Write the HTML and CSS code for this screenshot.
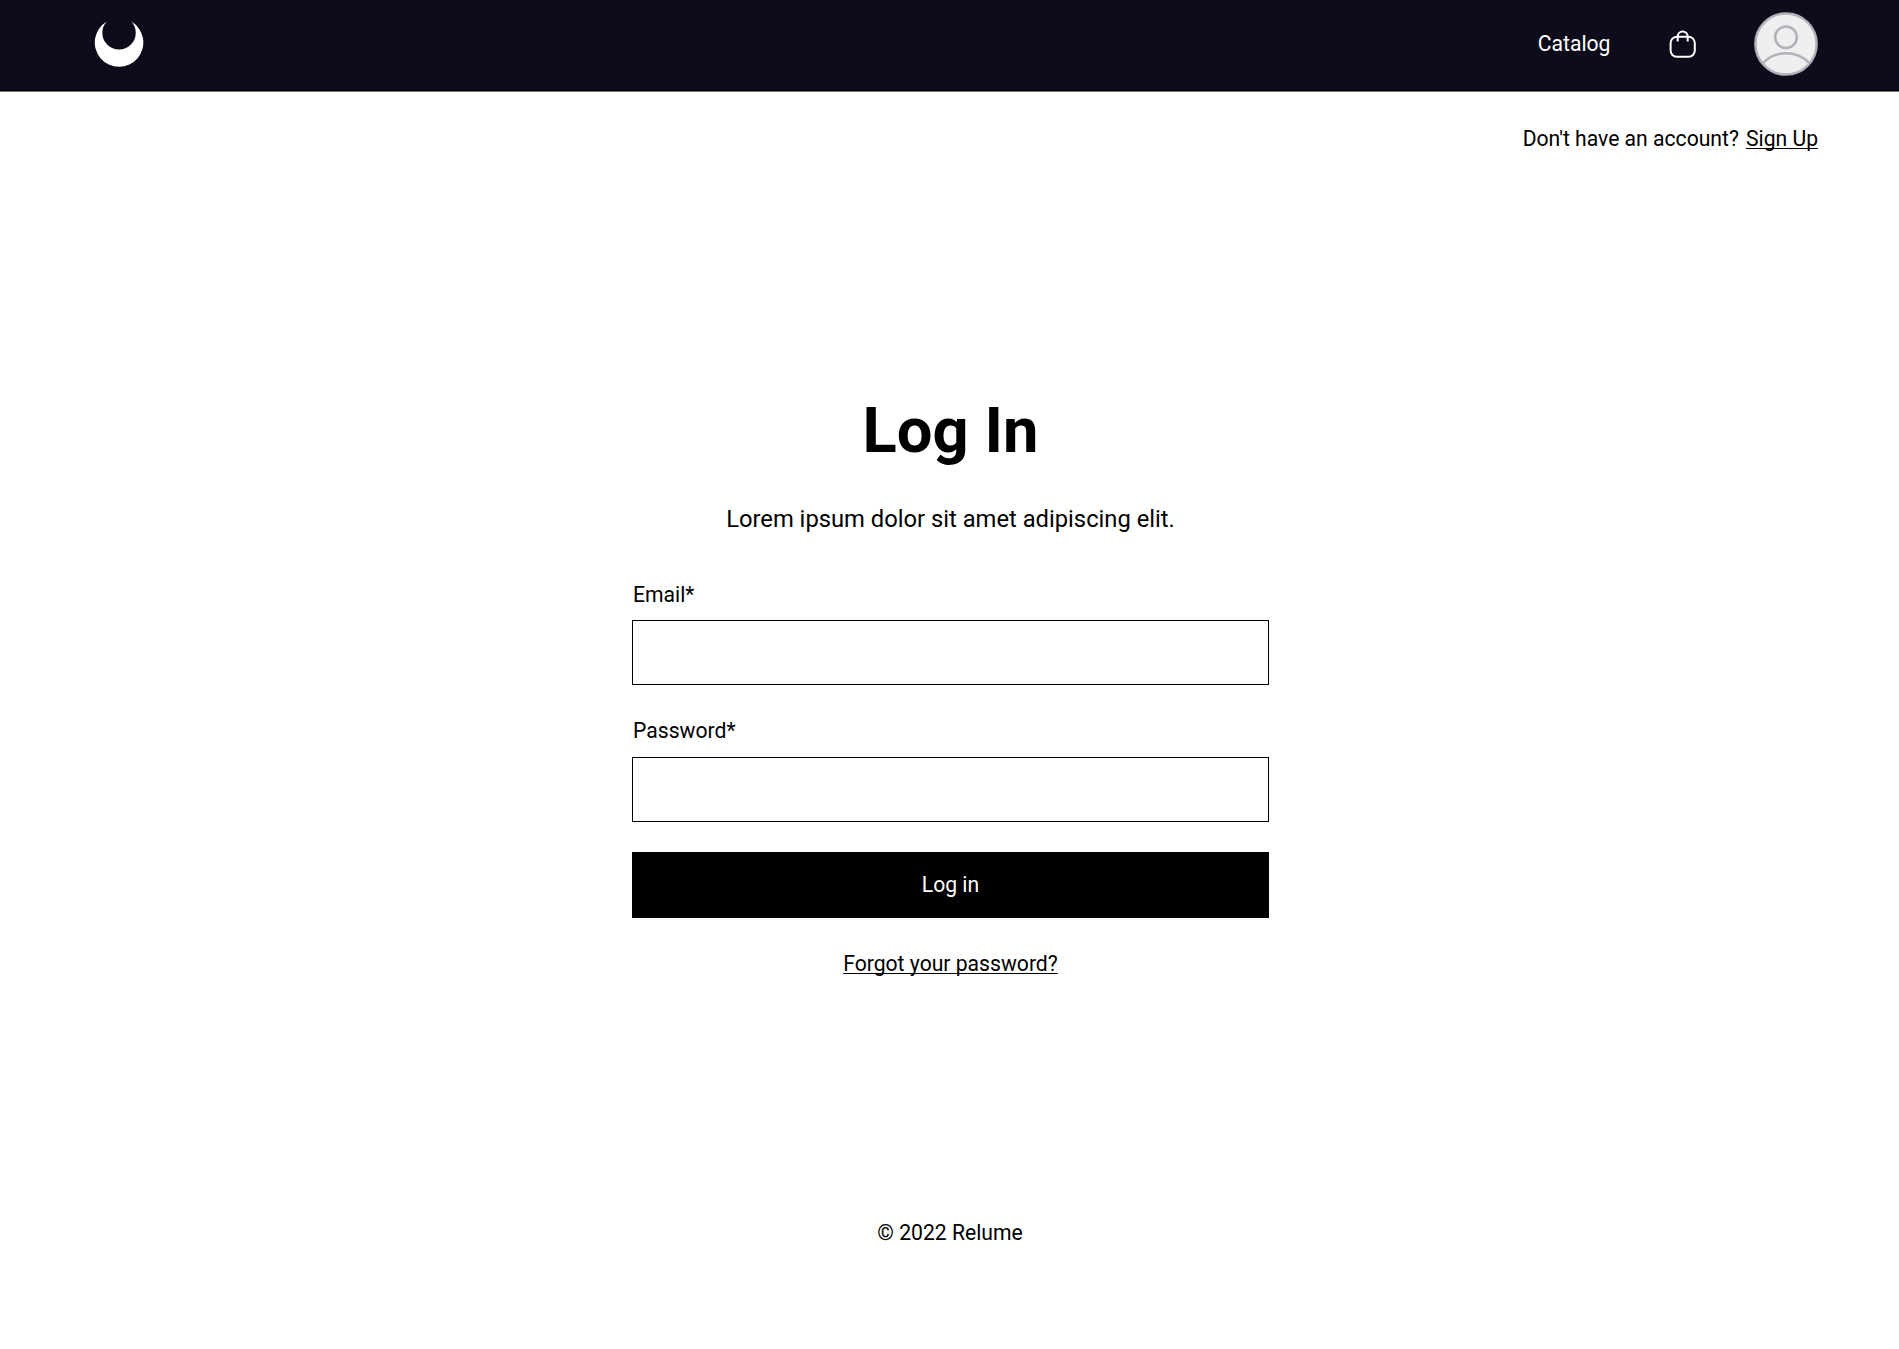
FILE: index.html
```html
<!DOCTYPE html>
<html lang="en">
<head>
<meta charset="utf-8">
<title>Log In</title>
<link rel="stylesheet" href="styles.css">
</head>
<body>
<header class="navbar">
  <a class="logo" href="#" aria-label="Home">
    <svg width="52" height="52" viewBox="93.2 17.9 52 52"><path fill="#fff" d="M107 21.4A24.3 24.3 0 1 0 131.5 21.4A16.7 16.7 0 1 1 107 21.4Z"/></svg>
  </a>
  <nav class="nav-links">
    <a class="nav-link" href="#">Catalog</a>
    <a class="bag" href="#" aria-label="Bag">
      <svg width="28" height="30" viewBox="0 0 28 30" fill="none" stroke="#fff" stroke-width="2"><rect x="1.6" y="7.8" width="24.2" height="20" rx="6.2"/><path d="M8.7 12.6V7.4a5 5 0 0 1 10 0V12.6"/></svg>
    </a>
    <a class="avatar" href="#" aria-label="Account">
      <svg width="64" height="64" viewBox="0 0 64 64" stroke="#b1b2b9" stroke-width="2.5"><circle cx="32" cy="32" r="30.6" fill="#efeff0"/><circle cx="32" cy="25.2" r="10.8" fill="none"/><path fill="none" d="M9 50.8a32.5 32.5 0 0 1 46 0"/></svg>
    </a>
  </nav>
</header>
<div class="signup">
  <span>Don't have an account?</span>
  <a href="#">Sign Up</a>
</div>
<main class="login">
  <h1>Log In</h1>
  <p class="intro">Lorem ipsum dolor sit amet adipiscing elit.</p>
  <form class="form">
    <label class="field"><span>Email*</span><input type="email"></label>
    <label class="field"><span>Password*</span><input type="password"></label>
    <button type="button">Log in</button>
    <a class="forgot" href="#">Forgot your password?</a>
  </form>
</main>
<footer class="footer">© 2022 Relume</footer>
</body>
</html>
```

FILE: styles.css
```css
* {
  box-sizing: border-box;
}

body {
  margin: 0;
  min-height: 1349px;
  display: flex;
  flex-direction: column;
  background: #fff;
  color: #000;
  font-family: Roboto, "Liberation Sans", sans-serif;
  font-size: 21.15px;
  line-height: 32px;
}

a {
  color: inherit;
}

svg {
  display: block;
}

.navbar {
  height: 92px;
  padding: 0 81px 3px 93px;
  display: flex;
  align-items: center;
  justify-content: space-between;
  background: linear-gradient(#0e0b1b 90px, #000 90px);
  border-bottom: 1px solid #73736f;
  color: #fff;
}

.nav-links {
  display: flex;
  align-items: center;
}

.nav-link {
  margin-right: 58.5px;
  text-decoration: none;
}

.bag {
  margin-right: 57px;
}

.signup {
  display: flex;
  justify-content: flex-end;
  gap: 7px;
  padding: 31px 81px 0 0;
}

.signup a,
.forgot {
  text-decoration-thickness: 1px;
  text-underline-offset: 2px;
  text-decoration-skip-ink: none;
}

.login {
  width: 637px;
  margin: 237px 0 0 632px;
}

h1 {
  margin: 0;
  font-size: 63.3px;
  line-height: 76px;
  font-weight: 700;
  text-align: center;
}

.intro {
  margin: 33px 0 0;
  font-size: 23.75px;
  line-height: 36px;
  text-align: center;
}

.form {
  display: flex;
  flex-direction: column;
  margin-top: 42px;
}

.field {
  display: flex;
  flex-direction: column;
  gap: 9px;
  margin-bottom: 30px;
}

.field span {
  padding-left: 1px;
}

.field input {
  height: 65px;
  margin: 0;
  padding: 0 16px;
  border: 1px solid #000;
  border-radius: 0;
  background: #fff;
  font: inherit;
}

.field + .field {
  gap: 10px;
}

button {
  height: 66px;
  padding: 0 0 1px;
  border: 0;
  background: #000;
  color: #fff;
  font: inherit;
}

.forgot {
  align-self: center;
  margin-top: 30px;
}

.footer {
  margin-top: 237px;
  padding-left: 1px;
  text-align: center;
}
```
